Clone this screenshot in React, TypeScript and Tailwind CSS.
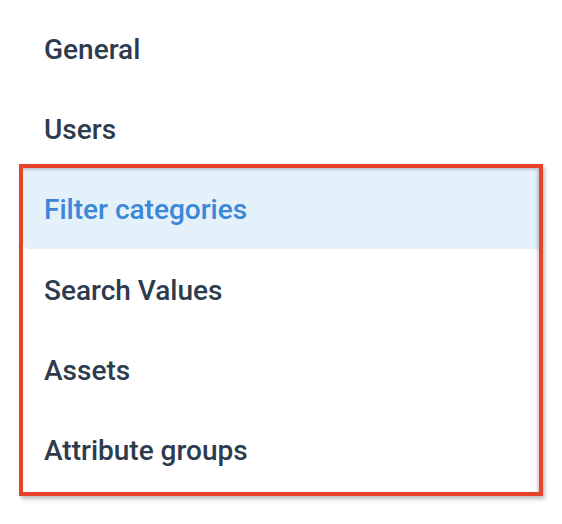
import React from "react"

const topItems = ["General", "Users"]

const boxedItems = [
  { label: "Filter categories", active: true },
  { label: "Search Values", active: false },
  { label: "Assets", active: false },
  { label: "Attribute groups", active: false },
]

export default function App() {
  return (
    <div
      className="min-h-screen w-[562px] bg-white px-[19px] pt-[8px]"
      style={{ fontFamily: "Roboto, 'Noto Sans', sans-serif" }}
    >
      <ul>
        {topItems.map((item) => (
          <li
            key={item}
            className="flex h-[80px] items-center px-[25px] pt-[3px] text-[28px] font-medium text-[#2d3b4d]"
          >
            {item}
          </li>
        ))}
      </ul>

      {/* highlighted section */}
      <div className="relative -mt-[4px] border-[4px] border-[#e8422b] pb-[3px] shadow-[2px_3px_4px_rgba(0,0,0,0.25)]">
        <ul>
          {boxedItems.map((item) => (
            <li
              key={item.label}
              className={
                item.active
                  ? "flex h-[81px] items-center rounded-bl-md bg-[#e4f1fa] px-[21px] pt-[3px] text-[28px] font-medium text-[#3b88d8]"
                  : "flex h-[80px] items-center px-[21px] pt-[3px] text-[28px] font-medium text-[#2d3b4d]"
              }
            >
              {item.label}
            </li>
          ))}
        </ul>
        <div className="pointer-events-none absolute inset-0 shadow-[inset_-2px_2px_3px_rgba(0,0,0,0.18)]" />
      </div>
    </div>
  )
}
